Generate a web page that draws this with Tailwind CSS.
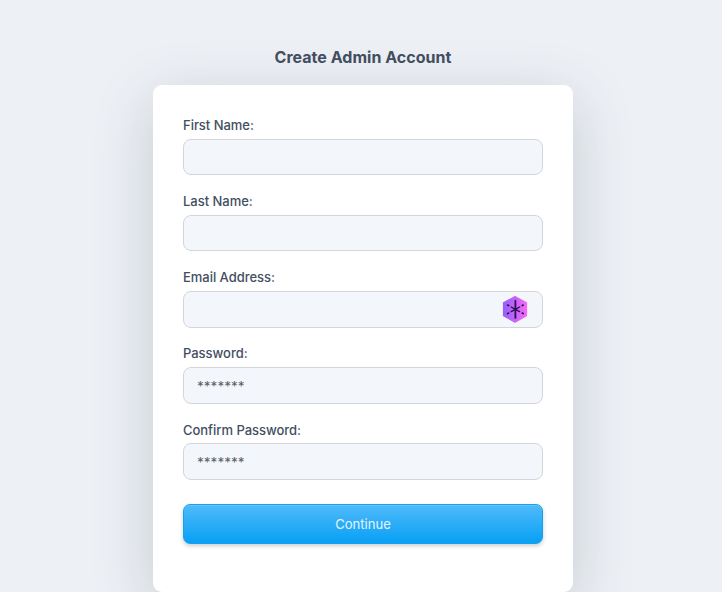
<!DOCTYPE html>
<html lang="en">
<head>
  <meta charset="UTF-8">
  <meta name="viewport" content="width=device-width, initial-scale=1.0">
  <title>Create Admin Account</title>
  <script src="https://cdn.jsdelivr.net/npm/@tailwindcss/browser@4"></script>
</head>
<body class="h-screen overflow-hidden bg-[#edf0f5] pl-1 font-['Inter',sans-serif] text-[#434e61]">
  <div class="flex flex-col items-center pt-[45px]">
    <h1 class="mb-4 text-base font-bold leading-6 tracking-[0.03px]">Create Admin Account</h1>
    <form class="h-[507px] w-[420px] rounded-[9px] bg-white px-[30px] pt-[30px] shadow-[0_16px_60px_rgba(60,78,80,0.22)]">
      <div class="flex flex-col gap-4">
        <div class="h-15">
          <label for="first" class="block pb-1 text-[13px] font-medium leading-5 tracking-[-0.03px]">First Name:</label>
          <input id="first" type="text" class="block h-9 w-full rounded-lg border border-[#d3d5d9] bg-[#f3f7fc] px-[13px] text-[13px]">
        </div>
        <div class="h-15">
          <label for="last" class="block pb-1 text-[13px] font-medium leading-5 tracking-[-0.03px]">Last Name:</label>
          <input id="last" type="text" class="block h-9 w-full rounded-lg border border-[#d3d5d9] bg-[#f3f7fc] px-[13px] text-[13px]">
        </div>
        <div class="h-15">
          <label for="email" class="block pb-1 text-[13px] font-medium leading-5 tracking-[-0.03px]">Email Address:</label>
          <div class="relative">
            <input id="email" type="email" class="block h-[37px] w-full rounded-lg border border-[#d3d5d9] bg-[#f3f7fc] px-[13px] text-[13px]">
            <svg class="absolute right-[15px] top-[4px] h-[28px] w-[26px]" viewBox="0 0 26 28">
              <defs>
                <linearGradient id="hex" x1="0" y1="0" x2="1" y2="0">
                  <stop offset="0" stop-color="#9561fb" />
                  <stop offset="1" stop-color="#f766f8" />
                </linearGradient>
              </defs>
              <path d="M13 1.5 24.5 7.8V20.8L13 27.2 1.5 20.8V7.8Z" fill="url(#hex)" stroke="url(#hex)" stroke-width="1.2" stroke-linejoin="round" />
              <g stroke="#2b1250" stroke-linecap="round" fill="none">
                <path d="M13.4 5.7V22.9" stroke-width="1.8" />
                <path d="M13.4 14.3 9.2 12M13.4 14.3 9.2 16.6M13.4 14.3 17.6 12M13.4 14.3 17.6 16.6" stroke-width="1.4" />
                <path d="M5.7 10.1 6.5 10.5M5.7 18.5 6.5 18.1M21.1 10.1 20.3 10.5M21.1 18.5 20.3 18.1" stroke-width="1.7" />
              </g>
            </svg>
          </div>
        </div>
        <div class="h-15">
          <label for="password" class="block pb-1 text-[13px] font-medium leading-5 tracking-[-0.03px]">Password:</label>
          <input id="password" type="password" placeholder="*******" class="block h-[37px] w-full rounded-lg border border-[#d3d5d9] bg-[#f3f7fc] px-[13px] text-[13.6px] placeholder:text-[#5f6368]">
        </div>
        <div class="h-15">
          <label for="confirm" class="block pb-[3px] pt-px text-[13px] font-medium leading-5 tracking-[-0.03px]">Confirm Password:</label>
          <input id="confirm" type="password" placeholder="*******" class="block h-[37px] w-full rounded-lg border border-[#d3d5d9] bg-[#f3f7fc] px-[13px] text-[13.6px] placeholder:text-[#5f6368]">
        </div>
      </div>
      <button type="button" class="mt-[25px] block h-10 w-full rounded-[7px] border border-[#16a0ee] bg-linear-to-b/srgb from-[#4fbafa] to-[#08a0f5] pt-px text-[13.1px] text-[#e6f5ff] shadow-[0_2px_4px_rgba(0,0,0,0.2),inset_0_1px_0_rgba(255,255,255,0.15)]">Continue</button>
    </form>
  </div>
</body>
</html>
